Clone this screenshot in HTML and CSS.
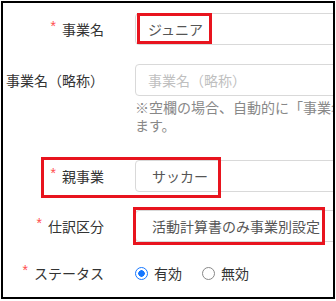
FILE: index.html
```html
<!DOCTYPE html>
<html lang="ja">
<head>
    <meta charset="UTF-8">
    <title>事業設定</title>
    <link rel="stylesheet" href="styles.css">
</head>
<body>

    <div class="frame">
        <div class="row row-name">
            <label class="label"><span class="req">*</span>事業名</label>
            <div class="control"><input class="input" type="text" value="ジュニア"></div>
        </div>

        <div class="row row-short">
            <label class="label">事業名（略称）</label>
            <div class="control">
                <input class="input" type="text" placeholder="事業名（略称）">
                <div class="help">※空欄の場合、自動的に「事業名」が設定され<br>ます。</div>
            </div>
        </div>

        <div class="row row-parent">
            <label class="label"><span class="req">*</span>親事業</label>
            <div class="control"><div class="select">サッカー</div></div>
        </div>

        <div class="row row-kind">
            <label class="label"><span class="req">*</span>仕訳区分</label>
            <div class="control"><div class="select">活動計算書のみ事業別設定</div></div>
        </div>

        <div class="row">
            <label class="label"><span class="req">*</span>ステータス</label>
            <div class="control radios">
                <span class="radio-item"><span class="radio checked"></span>有効</span>
                <span class="radio-item"><span class="radio"></span>無効</span>
            </div>
        </div>

        <!-- 赤枠の注記 -->
        <div class="mark mark-name"></div>
        <div class="mark mark-parent"></div>
        <div class="mark mark-kind"></div>
    </div>

</body>
</html>
```

FILE: styles.css
```css
body {
    margin: 0;
    font-family: "Noto Sans CJK JP", sans-serif;
    font-size: 14px;
    background: #fff;
}
.frame {
    position: relative;
    margin: 1px 0 0 1px;
    width: 334px;
    height: 298px;
    box-sizing: border-box;
    border: 2px solid #000;
    padding-top: 10px;
    overflow: hidden;
}
.row {
    display: grid;
    grid-template-columns: 101px 320px;
    column-gap: 31px;
    align-items: start;
}
.row-name { margin-bottom: 19px; }
.row-short { margin-bottom: 26px; }
.row-parent { margin-bottom: 18px; }
.row-kind { margin-bottom: 15px; }

.label {
    height: 32px;
    line-height: 32px;
    text-align: right;
    color: #333;
    white-space: nowrap;
}
.req {
    font-family: "Liberation Sans", sans-serif;
    color: #ff4d4f;
    margin-right: 6px;
    vertical-align: top;
    line-height: 26px;
}
.input, .select {
    display: block;
    width: 100%;
    height: 32px;
    box-sizing: border-box;
    border: 1px solid #d9d9d9;
    border-radius: 4px;
    font: inherit;
    color: #555;
    background: #fff;
}
.input {
    padding: 0 12px;
}
.input::placeholder {
    color: #bfbfbf;
}
.select {
    padding: 0 16px;
    line-height: 30px;
    white-space: nowrap;
}
.help {
    margin-top: 2px;
    line-height: 18px;
    color: #888;
    white-space: nowrap;
}
.radios {
    display: flex;
    align-items: center;
    height: 32px;
    color: #333;
}
.radio-item {
    display: flex;
    align-items: center;
    margin-right: 20px;
}
.radio {
    width: 13px;
    height: 13px;
    box-sizing: border-box;
    border: 1px solid #888;
    border-radius: 50%;
    margin-right: 6px;
}
.radio.checked {
    border-color: #1677ff;
    background: radial-gradient(circle, #1677ff 0 3px, #fff 3.5px);
}
.mark {
    position: absolute;
    border: 3px solid #e8141e;
    box-sizing: border-box;
}
.mark-name { left: 134px; top: 10px; width: 75px; height: 31px; }
.mark-parent { left: 38px; top: 154px; width: 180px; height: 41px; }
.mark-kind { left: 130px; top: 204px; width: 192px; height: 38px; }
```
